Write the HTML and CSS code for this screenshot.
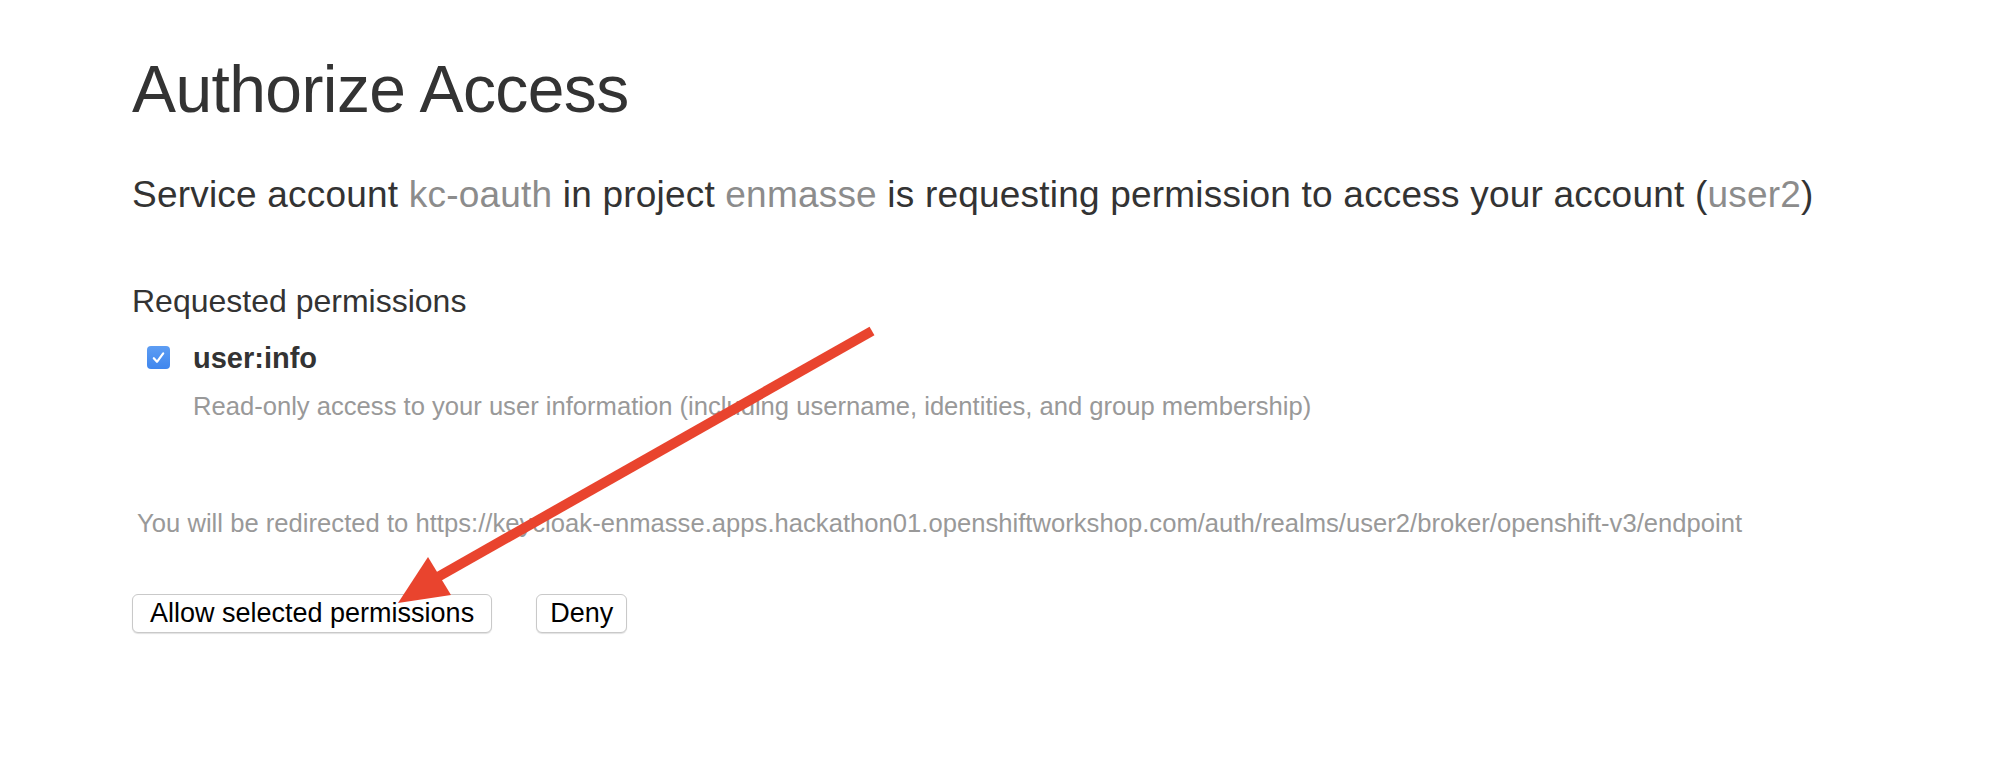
FILE: index.html
```html
<!DOCTYPE html>
<html lang="en">
<head>
<meta charset="utf-8">
<title>Authorize Access</title>
<link rel="stylesheet" href="styles.css">
</head>
<body>
<main class="page">
  <h1 class="title">Authorize Access</h1>
  <p class="lead">Service account <span class="muted">kc-oauth</span> in project <span class="muted">enmasse</span> is requesting permission to access your account (<span class="muted">user2</span>)</p>
  <h2 class="section">Requested permissions</h2>
  <div class="perm">
    <span class="check" aria-hidden="true">
      <svg viewBox="0 0 23 23" width="23" height="23"><path d="M6.8 12.2 L10 15.8 L16.2 7.4" fill="none" stroke="#fff" stroke-width="2.2" stroke-linecap="round" stroke-linejoin="round"/></svg>
    </span>
    <div class="perm-text">
      <div class="perm-name">user:info</div>
      <div class="perm-desc">Read-only access to your user information (including username, identities, and group membership)</div>
    </div>
  </div>
  <p class="redirect">You will be redirected to https://keycloak-enmasse.apps.hackathon01.openshiftworkshop.com/auth/realms/user2/broker/openshift-v3/endpoint</p>
  <div class="actions">
    <button class="btn" type="button">Allow selected permissions</button>
    <button class="btn btn-compact" type="button">Deny</button>
  </div>
</main>
<svg class="arrow" width="2014" height="784" viewBox="0 0 2014 784" aria-hidden="true">
  <line x1="872" y1="331" x2="436" y2="578" stroke="#e9442e" stroke-width="10" stroke-linecap="butt"/>
  <polygon points="398,603 428,557 451,595" fill="#e9442e"/>
</svg>
</body>
</html>
```
FILE: styles.css
```css
html, body {
  margin: 0;
  padding: 0;
  background: #ffffff;
  overflow: hidden;
}

body {
  font-family: "Liberation Sans", Arial, Helvetica, sans-serif;
  color: #333333;
  width: 2014px;
  height: 784px;
  position: relative;
}

.page {
  padding: 53px 0 0 132px;
}

.title {
  margin: 0;
  font-size: 66px;
  line-height: 72px;
  font-weight: 400;
  letter-spacing: -0.6px;
  color: #333333;
}

.lead {
  margin: 50px 0 0;
  font-size: 37px;
  line-height: 40px;
  letter-spacing: 0.2px;
  color: #333333;
  white-space: nowrap;
}

.muted {
  color: #8c8c8c;
}

.section {
  margin: 68px 0 0;
  font-size: 32px;
  line-height: 36px;
  font-weight: 400;
  color: #333333;
}

.perm {
  display: flex;
  align-items: flex-start;
  gap: 23px;
  margin-top: 24px;
  padding-left: 15px;
}

.check {
  display: block;
  width: 23px;
  height: 23px;
  margin-top: 3px;
  border-radius: 4px;
  background: linear-gradient(#5d9df3, #3f86ee);
  flex: none;
}

.check svg {
  display: block;
}

.perm-name {
  font-size: 29px;
  line-height: 30px;
  font-weight: 700;
  color: #333333;
}

.perm-desc {
  margin-top: 18px;
  font-size: 25.6px;
  line-height: 30px;
  color: #999999;
  white-space: nowrap;
}

.redirect {
  margin: 88px 0 0;
  padding-left: 5px;
  font-size: 25.6px;
  line-height: 28px;
  letter-spacing: 0.02px;
  color: #999999;
  white-space: nowrap;
}

.actions {
  display: flex;
  gap: 44px;
  margin-top: 57px;
}

.btn {
  font-family: "Liberation Sans", Arial, Helvetica, sans-serif;
  font-size: 27px;
  line-height: 37px;
  color: #000000;
  background: #ffffff;
  border: 1px solid #c9c9c9;
  border-radius: 6px;
  padding: 0 17px;
  margin: 0;
  box-shadow: 0 1px 1px rgba(0, 0, 0, 0.12);
}

.btn-compact {
  padding: 0 13px;
}

.arrow {
  position: absolute;
  left: 0;
  top: 0;
  pointer-events: none;
}
```
